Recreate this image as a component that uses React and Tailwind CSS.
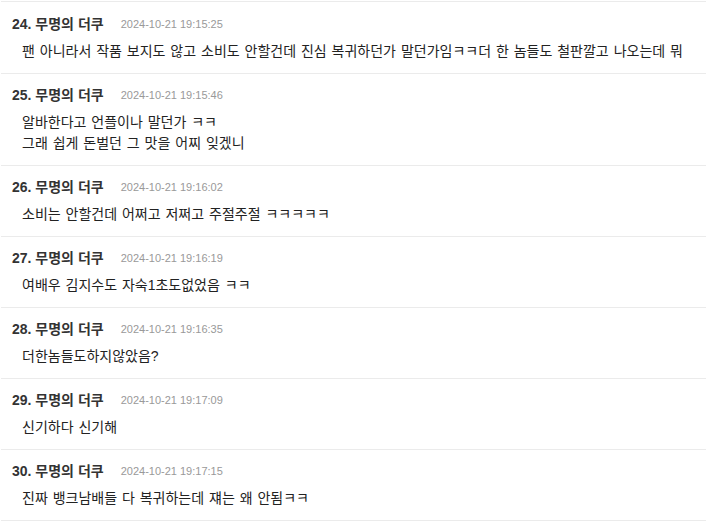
const comments = [
  { no: 24, time: '2024-10-21 19:15:25', lines: ['팬 아니라서 작품 보지도 않고 소비도 안할건데 진심 복귀하던가 말던가임ㅋㅋ더 한 놈들도 철판깔고 나오는데 뭐'] },
  { no: 25, time: '2024-10-21 19:15:46', lines: ['알바한다고 언플이나 말던가 ㅋㅋ', '그래 쉽게 돈벌던 그 맛을 어찌 잊겠니'] },
  { no: 26, time: '2024-10-21 19:16:02', lines: ['소비는 안할건데 어쩌고 저쩌고 주절주절 ㅋㅋㅋㅋㅋ'] },
  { no: 27, time: '2024-10-21 19:16:19', lines: ['여배우 김지수도 자숙1초도없었음 ㅋㅋ'] },
  { no: 28, time: '2024-10-21 19:16:35', lines: ['더한놈들도하지않았음?'] },
  { no: 29, time: '2024-10-21 19:17:09', lines: ['신기하다 신기해'] },
  { no: 30, time: '2024-10-21 19:17:15', lines: ['진짜 뱅크남배들 다 복귀하는데 쟤는 왜 안됨ㅋㅋ'] },
];

function Comment({ c, first }) {
  return (
    <li className={`border-b border-[#ebebeb] pl-[11px] pb-[11px] ${first ? 'pt-[13px]' : 'pt-3'}`}>
      <div className="flex items-center h-[18px] leading-[18px]">
        <span className="text-[14px] font-bold text-[#333]">{c.no}. 무명의 더쿠</span>
        <span className="ml-[17px] text-[11px] text-[#999]">{c.time}</span>
      </div>
      <div className="mt-2 pl-[10px] text-[14px] leading-[21px] text-[#222] [word-spacing:1px]">
        {c.lines.map((l, i) => (
          <p key={i}>{l}</p>
        ))}
      </div>
    </li>
  );
}

export default function App() {
  return (
    <div
      className="min-h-screen bg-white pt-px"
      style={{ fontFamily: '"Liberation Sans", "Noto Sans CJK KR", sans-serif' }}
    >
      <ul className="mx-px mr-[2px] border-t border-[#ebebeb]">
        {comments.map((c, i) => (
          <Comment key={c.no} c={c} first={i === 0} />
        ))}
      </ul>
    </div>
  );
}
